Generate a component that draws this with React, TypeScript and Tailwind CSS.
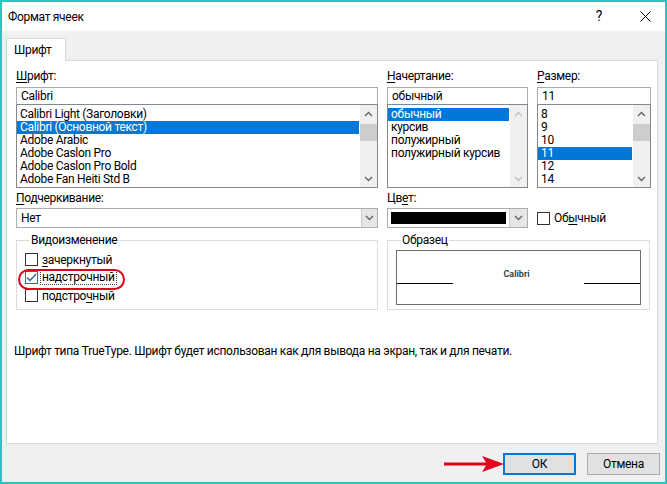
import React from 'react';

const Chevron = ({ dir, color = '#606060' }: { dir: 'up' | 'down'; color?: string }) => (
  <svg width="9" height="6" viewBox="0 0 9 6">
    <polyline
      points={dir === 'up' ? '1,5 4.5,1.5 8,5' : '1,1 4.5,4.5 8,1'}
      fill="none"
      stroke={color}
      strokeWidth="1.3"
    />
  </svg>
);

const ScrollBar = ({ disabled }: { disabled?: boolean }) => (
  <div className="w-[17px] bg-[#f0f0f0] flex flex-col">
    <div className="h-[17px] flex items-center justify-center">
      <Chevron dir="up" color={disabled ? '#c0c0c0' : '#606060'} />
    </div>
    {!disabled && <div className="h-[17px] bg-[#cdcdcd] mt-[2px]" />}
    <div className="flex-1" />
    <div className="h-[17px] flex items-center justify-center">
      <Chevron dir="down" color={disabled ? '#c0c0c0' : '#606060'} />
    </div>
  </div>
);

const ListBox = ({ items, selected, disabled }: { items: string[]; selected: number; disabled?: boolean }) => (
  <div className="h-[84px] -mt-px border border-[#828790] flex bg-white">
    <div className="flex-1 pt-[3px] pr-[1px] overflow-hidden">
      {items.map((it, i) => (
        <div
          key={it}
          className={`h-[13px] leading-[13px] pl-[3px] whitespace-nowrap ${i === selected ? 'bg-[#0078d7] text-white' : ''}`}
        >
          {it}
        </div>
      ))}
    </div>
    <ScrollBar disabled={disabled} />
  </div>
);

const TextBox = ({ value }: { value: string }) => (
  <div className="h-[18px] border border-[#abadb3] leading-[16px] pl-[4px] bg-white">{value}</div>
);

const Label = ({ first, rest, pre = '', h = 'h-[20px]' }: { first: string; rest: string; pre?: string; h?: string }) => (
  <div className={`${h} leading-[16px]`}>
    {pre}
    <span className="underline underline-offset-2">{first}</span>
    {rest}
  </div>
);

const CheckBox = ({ checked }: { checked?: boolean }) => (
  <div
    className={`w-[13px] h-[13px] border bg-white flex items-center justify-center ${checked ? 'border-[#0078d7]' : 'border-[#333333]'}`}
  >
    {checked && (
      <svg width="11" height="9" viewBox="0 0 11 9">
        <polyline points="1,4.5 4,7.5 10,1" fill="none" stroke="#1a5fa8" strokeWidth="1.3" />
      </svg>
    )}
  </div>
);

export default function App() {
  return (
    <div className="w-[667px] h-[484px] border-2 border-[#2cc3c3] bg-[#f0f0f0] flex flex-col text-[12px] tracking-[-0.3px] text-black font-['Roboto',sans-serif] relative overflow-hidden">
      {/* title bar */}
      <div className="h-[29px] bg-white flex items-center pl-[6px] shrink-0">
        <span>Формат ячеек</span>
        <span className="ml-auto w-[14px] text-center text-[14px]">?</span>
        <svg className="ml-[34px] mr-[14px]" width="11" height="11" viewBox="0 0 11 11">
          <path d="M0.5 0.5 L10.5 10.5 M10.5 0.5 L0.5 10.5" stroke="#000" strokeWidth="1" />
        </svg>
      </div>

      {/* tabs + panel */}
      <div className="px-[4px] pt-[7px]">
        <div className="w-[60px] h-[23px] bg-white border border-[#d9d9d9] border-b-0 pl-[7px] leading-[22px] relative z-10 -mb-px">
          Шрифт
        </div>
        <div className="h-[384px] w-[652px] bg-white border border-[#d9d9d9] pl-[9px] pt-[7px]">
          <div className="flex">
            <div className="w-[362px]">
              <Label first="Ш" rest="рифт:" h="h-[19px]" />
              <TextBox value="Calibri" />
              <ListBox
                selected={1}
                items={[
                  'Calibri Light (Заголовки)',
                  'Calibri (Основной текст)',
                  'Adobe Arabic',
                  'Adobe Caslon Pro',
                  'Adobe Caslon Pro Bold',
                  'Adobe Fan Heiti Std B',
                ]}
              />
            </div>
            <div className="w-[141px] ml-[9px]">
              <Label first="Н" rest="ачертание:" h="h-[19px]" />
              <TextBox value="обычный" />
              <ListBox disabled selected={0} items={['обычный', 'курсив', 'полужирный', 'полужирный курсив']} />
            </div>
            <div className="w-[114px] ml-[9px]">
              <Label first="Р" rest="азмер:" h="h-[19px]" />
              <TextBox value="11" />
              <ListBox selected={3} items={['8', '9', '10', '11', '12', '14']} />
            </div>
          </div>

          <div className="flex mt-[2px]">
            <div className="w-[362px]">
              <Label first="П" rest="одчеркивание:" h="h-[18px]" />
              <div className="h-[20px] border border-[#abadb3] flex bg-white">
                <div className="flex-1 pl-[4px] leading-[18px]">Нет</div>
                <div className="w-[16px] bg-[#e6e6e6] border-l border-[#cccccc] flex items-center justify-center">
                  <Chevron dir="down" />
                </div>
              </div>
            </div>
            <div className="w-[141px] ml-[9px]">
              <Label pre="Цв" first="е" rest="т:" h="h-[18px]" />
              <div className="h-[20px] border border-[#abadb3] flex bg-white">
                <div className="flex-1 p-[3px]">
                  <div className="h-full bg-black" />
                </div>
                <div className="w-[18px] bg-[#e6e6e6] border-l border-[#cccccc] flex items-center justify-center">
                  <Chevron dir="down" />
                </div>
              </div>
            </div>
            <div className="ml-[9px] pt-[18px] flex items-center gap-[4px] h-[38px]">
              <CheckBox />
              <span>
                Об<span className="underline underline-offset-2">ы</span>чный
              </span>
            </div>
          </div>

          <div className="flex mt-[5px]">
            <fieldset className="w-[362px] h-[77px] border border-[#dcdcdc] pl-[8px]">
              <legend className="ml-[5px] px-[1px] leading-[14px]">Видоизменение</legend>
              <div className="flex flex-col gap-[5px] pt-[6px]">
                <div className="flex items-center gap-[4px] h-[13px]">
                  <CheckBox />
                  <span>
                    <span className="underline underline-offset-2">з</span>ачеркнутый
                  </span>
                </div>
                <div className="flex items-center gap-[3px] h-[13px]">
                  <CheckBox checked />
                  <span className="outline outline-1 outline-dotted outline-[#444] leading-[13px] px-[1px]">надстрочный</span>
                </div>
                <div className="flex items-center gap-[4px] h-[13px]">
                  <CheckBox />
                  <span>
                    подстро<span className="underline underline-offset-2">ч</span>ный
                  </span>
                </div>
              </div>
            </fieldset>
            <fieldset className="w-[263px] h-[77px] ml-[9px] border border-[#dcdcdc] px-[8px]">
              <legend className="ml-[5px] px-[1px] leading-[14px]">Образец</legend>
              <div className="mt-[3px] h-[55px] border border-[#6d6d6d] flex flex-col">
                <div className="h-[32px] flex items-end justify-center">
                  <span className="text-[9px] tracking-normal font-semibold text-[#1d3b3b] leading-[12px] mb-[3px] mr-[4px]">Calibri</span>
                </div>
                <div className="flex justify-between">
                  <div className="w-[56px] h-px bg-black" />
                  <div className="w-[56px] h-px bg-black" />
                </div>
              </div>
            </fieldset>
          </div>

          <div className="mt-[32px] -ml-[2px]">
            Шрифт типа TrueType. Шрифт будет использован как для вывода на экран, так и для печати.
          </div>
        </div>
      </div>

      {/* buttons */}
      <div className="flex justify-end gap-[11px] pr-[5px] pt-[9px]">
        <div className="w-[73px] h-[22px] border-2 border-[#0078d7] bg-[#e1e1e1] flex items-center justify-center">ОК</div>
        <div className="w-[73px] h-[22px] border border-[#adadad] bg-[#e1e1e1] flex items-center justify-center">Отмена</div>
      </div>

      {/* annotations */}
      <div className="absolute left-[16px] top-[267px] w-[107px] h-[21px] border-[2.5px] border-[#e3001b] rounded-[11px]" />
      <svg className="absolute left-[440px] top-[452px]" width="64" height="20" viewBox="0 0 64 20">
        <path d="M2 10 L46 10" stroke="#e3001b" strokeWidth="3" />
        <path d="M40 2 L62 10 L40 18 L45 10 Z" fill="#e3001b" />
      </svg>
    </div>
  );
}
